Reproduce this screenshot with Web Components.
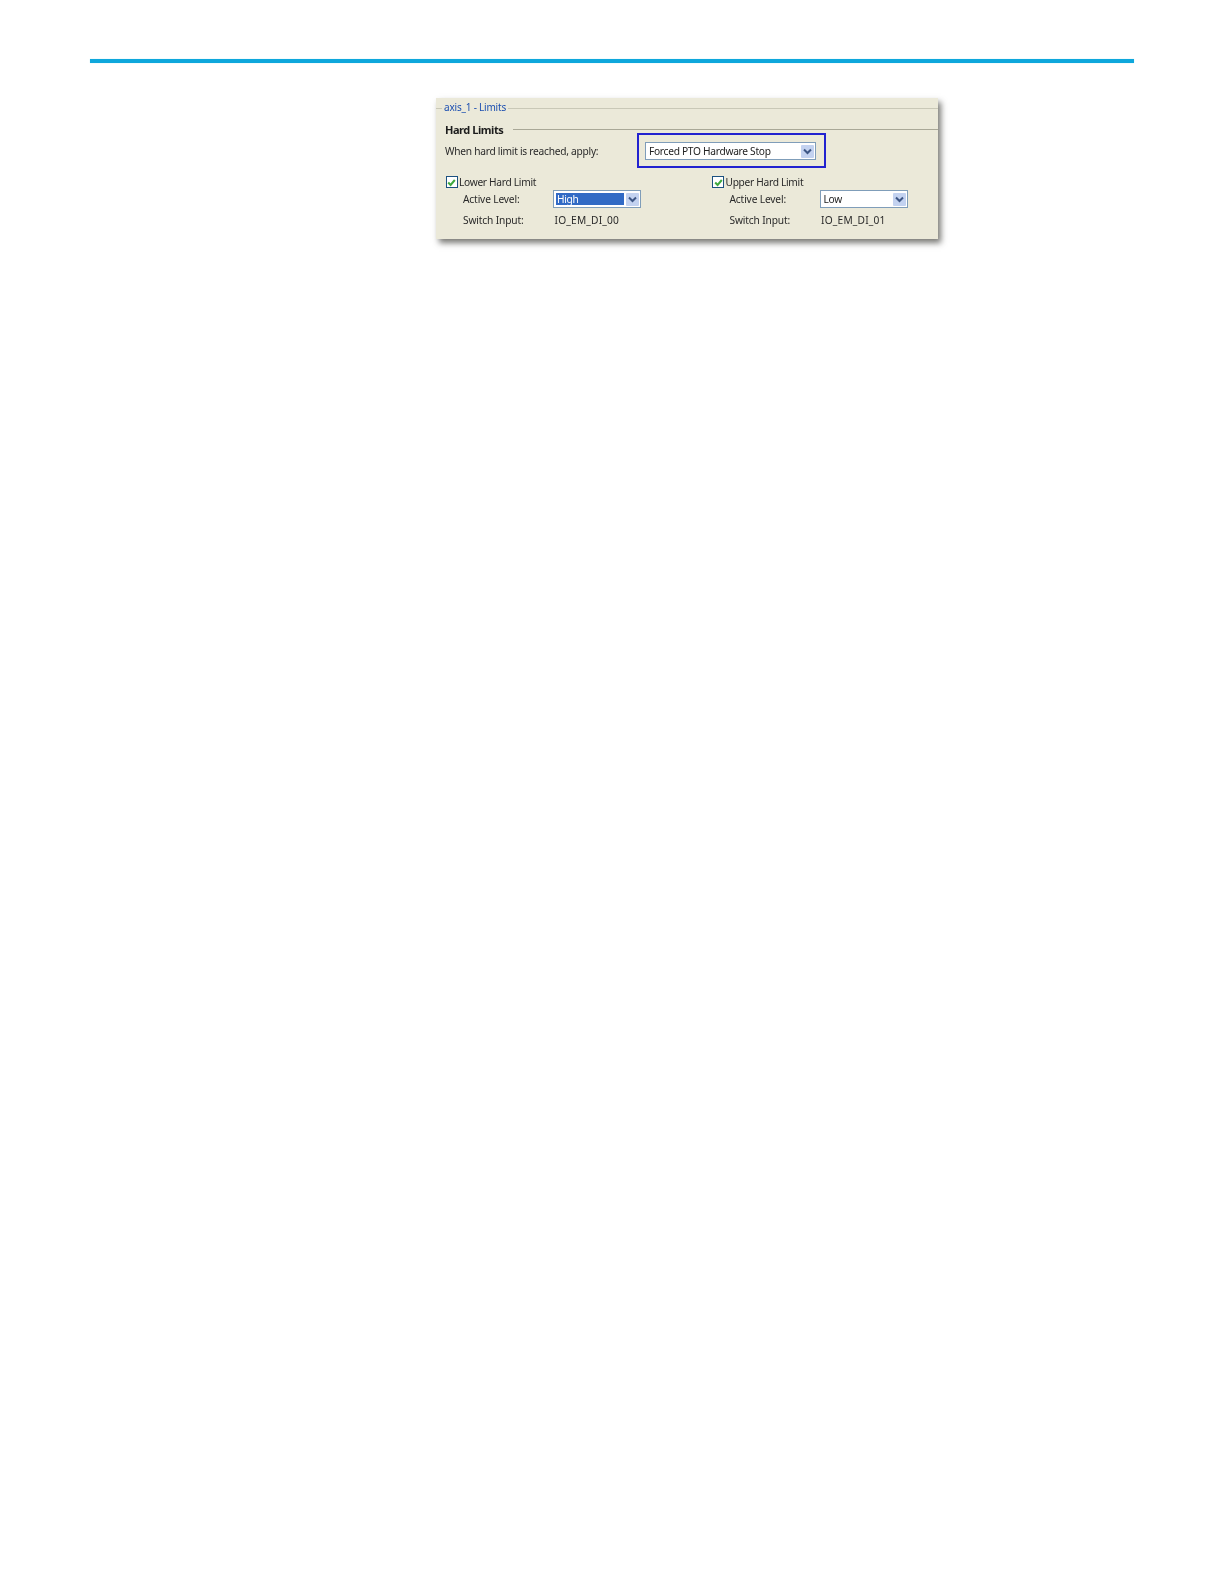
<!DOCTYPE html>
<html lang="en"><head><meta charset="utf-8"><title>axis_1 - Limits</title>
<style>
html,body{margin:0;padding:0;background:#fff}
body{font-family:"Noto Sans",sans-serif;width:1224px;height:1584px;overflow:hidden}
</style></head><body>
<manual-page>
<limits-panel title="axis_1 - Limits">
  <panel-section heading="Hard Limits">
    <apply-row label="When hard limit is reached, apply:"><combo-box width="171" value="Forced PTO Hardware Stop"></combo-box></apply-row>
    <limit-columns>
      <limit-group label="Lower Hard Limit" level="High" selected input="IO_EM_DI_00"></limit-group>
      <limit-group label="Upper Hard Limit" level="Low" input="IO_EM_DI_01"></limit-group>
    </limit-columns>
  </panel-section>
</limits-panel>
</manual-page>
<script>
function def(name, css, html){
  customElements.define(name, class extends HTMLElement{
    connectedCallback(){
      if(this.shadowRoot) return;
      const r=this.attachShadow({mode:'open'});
      const a=n=>this.getAttribute(n)||'';
      r.innerHTML='<style>'+css+'</style>'+html(a,this);
    }
  });
}
def('manual-page',
 `:host{display:block;padding:59px 90px 0 90px}
  .rule{height:4px;background:#0ea7dc;box-shadow:0 0 1px #7fdcf5}
  .body{padding:35px 0 0 346px}`,
 ()=>`<div class="rule"></div><div class="body"><slot></slot></div>`);
def('limits-panel',
 `:host{display:block;width:502px;height:141px;background:#ebe9d9;box-shadow:3px 4px 6px rgba(50,50,45,.65);font-size:10.2px;color:#2a2a2a;
   box-sizing:border-box;padding-top:3px;filter:blur(.3px)}
  .t{display:flex;align-items:center;height:12px;gap:2px}
  .t i{height:1px;background:#c9c8b7;display:block;position:relative;top:1px}
  .t i:first-child{width:6px;flex:none}
  .t i:last-child{flex:1}
  .t span{color:#1c4fb0;font-size:10px;white-space:nowrap;letter-spacing:-.2px}`,
 a=>`<div class="t"><i></i><span>${a('title')}</span><i></i></div><slot></slot>`);
def('panel-section',
 `:host{display:block;padding-top:10px}
  .h{display:flex;align-items:center;height:12px;padding-left:9px;gap:10px}
  .h b{font:bold 11px "Noto Sans",sans-serif;color:#1d1d1d;white-space:nowrap;letter-spacing:-.45px}
  .h i{flex:1;height:1px;background:#a9a897;display:block}`,
 a=>`<div class="h"><b>${a('heading')}</b><i></i></div><slot></slot>`);
def('apply-row',
 `:host{display:flex;align-items:center;height:35px;padding-left:9px;margin-top:-2px}
  .l{width:192px;white-space:nowrap;letter-spacing:-.26px}
  .b{box-sizing:border-box;width:189px;height:35px;border:2px solid #2222cf;padding:7px 0 0 6px}`,
 a=>`<span class="l">${a('label')}</span><div class="b"><slot></slot></div>`);
def('combo-box',
 `:host{display:block;color:#222;letter-spacing:-.29px}
  .c{box-sizing:border-box;height:18px;background:#fff;border:1px solid #7f9db9;display:flex;align-items:center;padding:2px 1px 2px 2px;gap:2px}
  .v{flex:1;height:100%;display:flex;align-items:center;padding-left:1px;white-space:nowrap}
  .v.s{background:#316ac5;color:#fff}
  .a{width:13px;height:13px;flex:none;background:#c3d2f0;border-radius:1px;display:flex;align-items:center;justify-content:center}
  svg{width:9px;height:7px}`,
 (a,el)=>`<div class="c" style="width:${a('width')}px"><span class="v ${el.hasAttribute('selected')?'s':''}">${a('value')}</span><span class="a"><svg viewBox="0 0 9 7"><path d="M1 1.5L4.5 5L8 1.5" fill="none" stroke="#3d5685" stroke-width="2"/></svg></span></div>`);
def('limit-columns',
 `:host{display:grid;grid-template-columns:266.5px 1fr;padding:7px 0 0 9.5px}`,
 ()=>`<slot></slot>`);
def('limit-group',
 `:host{display:block}
  .h{display:flex;align-items:center;height:14px;gap:1.5px;white-space:nowrap;letter-spacing:-.3px}
  .box{box-sizing:border-box;width:12px;height:12px;border:1px solid #1c5180;background:#fff;display:flex;align-items:center;justify-content:center;flex:none}
  svg{width:9px;height:9px}
  .f{display:flex;align-items:center;padding-left:17.5px;white-space:nowrap}
  .f span:first-child{width:90px;letter-spacing:-.15px}
  .lv{height:18px;margin-top:1px}
  .in{height:21px;margin-top:1px}
  .in span:last-child{padding-left:1.5px;letter-spacing:.2px}`,
 (a,el)=>`<div class="h"><span class="box"><svg viewBox="0 0 9 9"><path d="M1.2 4.5L3.6 7L7.8 2" fill="none" stroke="#3fa93f" stroke-width="2"/></svg></span><span>${a('label')}</span></div>
  <div class="f lv"><span>Active Level:</span><combo-box width="88" value="${a('level')}" ${el.hasAttribute('selected')?'selected':''}></combo-box></div>
  <div class="f in"><span>Switch Input:</span><span>${a('input')}</span></div>`);
</script>
</body></html>
